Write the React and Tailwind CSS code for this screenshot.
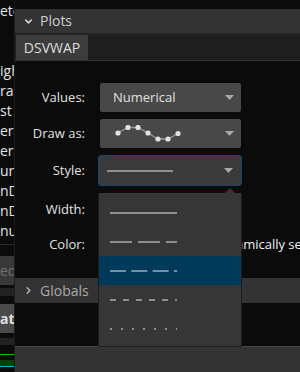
import { ChevronDown, ChevronRight } from 'lucide-react'

const leftLines = ['eter', 'igh', 'rail', 'st', 'erag', 'erag', 'unt', 'nDa', 'nDa', 'nua']

function Caret() {
  return (
    <svg width="9" height="5" viewBox="0 0 9 5" className="shrink-0">
      <path d="M0 0 L9 0 L4.5 5 Z" fill="#a8a8a8" />
    </svg>
  )
}

function Stroke({ dash, w = 67 }) {
  return (
    <svg width={w} height="2" className="block">
      <line x1="0" y1="1" x2={w} y2="1" stroke="#e8e8e8" strokeWidth="1.2" strokeDasharray={dash} />
    </svg>
  )
}

function Sparkline() {
  const pts = [[3, 8], [13, 2.5], [23, 2.5], [33, 8], [43, 14], [53, 14], [63, 8.5]]
  return (
    <svg width="68" height="18" viewBox="0 0 68 18">
      <polyline points={pts.map(p => p.join(',')).join(' ')} fill="none" stroke="#9a9a9a" strokeWidth="1.3" />
      {pts.map(([x, y], i) => <circle key={i} cx={x} cy={y} r="2.6" fill="#e2e2e2" />)}
    </svg>
  )
}

function Label({ children }) {
  return <div className="w-[70px] text-right text-[#e2e2e2] shrink-0">{children}</div>
}

export default function App() {
  return (
    <div className="w-[300px] h-[372px] flex bg-[#0b0b0b] overflow-hidden text-[13px] leading-none font-['Open_Sans',sans-serif]">
      {/* clipped left column */}
      <div className="w-[14px] shrink-0 flex flex-col overflow-hidden">
        <div className="flex flex-col pt-[1px]">
          {leftLines.map((t, i) => (
            <div key={i} className={`h-[20px] flex items-center whitespace-nowrap text-[#e4e4e4] text-[14px] ${i === 1 ? 'mt-[40px]' : ''}`}>{t}</div>
          ))}
        </div>
        <div className="mt-[3px] h-px bg-[#2c2c2c]" />
        <div className="mt-[11px] h-[29px] bg-[#383838] flex items-center whitespace-nowrap text-[#707070] text-[14px]">ed</div>
        <div className="mt-[3px] h-[8px] bg-[#222]" />
        <div className="mt-[8px] h-[29px] bg-[#4a4a4a] flex items-center whitespace-nowrap text-[#e0e0e0] font-bold text-[14px]">ate</div>
        <div className="mt-[5px] h-[7px] bg-[#222]" />
        <div className="mt-[9px] h-px bg-[#00c400]" />
        <div className="mt-[5px] h-[6px] bg-[#064006]" />
        <div className="h-px bg-[#00b8d0]" />
      </div>
      <div className="w-px shrink-0 bg-[#1c1c1c]" />

      {/* main panel */}
      <div className="relative flex-1 flex flex-col">
        <div className="h-[9px]" />
        <div className="h-[24px] bg-[#333] flex items-center text-[#cfcfcf] text-[14px]">
          <ChevronDown size={11} strokeWidth={3.5} className="ml-[8px] text-[#cfcfcf]" />
          <span className="ml-[6px]">Plots</span>
        </div>
        <div className="h-[2px] bg-[#232323]" />
        <div className="h-[25px] bg-[#1e1e1e] flex">
          <div className="ml-px w-[72px] bg-[#3c3c3c] flex items-center justify-center text-[#dcdcdc] text-[14px]">DSVWAP</div>
        </div>
        <div className="h-px bg-[#333]" />

        <div className="pt-[22px] flex flex-col">
          <div className="h-[29px] flex items-center">
            <Label>Values:</Label>
            <div className="ml-[15px] w-[141px] h-full bg-[#484848] rounded-[2px] flex items-center justify-between pl-[13px] pr-[7px] text-[#e0e0e0]">
              <span>Numerical</span>
              <Caret />
            </div>
          </div>
          <div className="mt-[7px] h-[29px] flex items-center">
            <Label>Draw as:</Label>
            <div className="ml-[15px] w-[141px] h-full bg-[#484848] rounded-[2px] flex items-center justify-between pl-[15px] pr-[7px]">
              <Sparkline />
              <Caret />
            </div>
          </div>
          <div className="mt-[7px] h-[31px] flex items-center">
            <Label>Style:</Label>
            <div className="ml-[13px] w-[144px] h-full bg-[#3a3a3a] border border-[#0c4c70] rounded-[3px] flex items-center justify-between pl-[8px] pr-[8px]">
              <Stroke w={66} />
              <Caret />
            </div>
          </div>
          <div className="mt-[8px] h-[30px] flex items-center">
            <Label>Width:</Label>
            <div className="ml-[15px] w-[141px] h-full bg-[#3a3a3a]" />
          </div>
          <div className="mt-[5px] h-[30px] flex items-center">
            <Label>Color:</Label>
            <div className="ml-[15px] w-[40px] h-[24px] bg-[#3a3a3a]" />
            <div className="ml-[20px] w-[13px] h-[13px] border border-[#888]" />
            <span className="ml-[39px] whitespace-nowrap text-[#f0f0f0]">Dynamically set color</span>
          </div>
          <div className="mt-[19px] h-[25px] bg-[#333] flex items-center text-[#a8a8a8] text-[14px]">
            <ChevronRight size={11} strokeWidth={3.5} className="ml-[8px] text-[#b0b0b0]" />
            <span className="ml-[6px]">Globals</span>
          </div>
        </div>
        <div className="flex-1" />
        <div className="h-px bg-[#4a4a4a]" />
        <div className="h-[25px] bg-[#333]" />

        {/* open style dropdown */}
        <div className="absolute left-[83px] top-[193px] w-[144px] h-[154px] bg-[#363636] border-x border-b border-[#1e1e1e] pt-[5px]">
          <svg width="10" height="5" viewBox="0 0 10 5" className="absolute right-[6px] top-[-5px]">
            <path d="M0 5 L5 0 L10 5 Z" fill="#363636" />
          </svg>
          {[null, '22 6', '16 5.3', '6 7', '2 9'].map((d, i) => (
            <div key={i} className={`h-[29px] flex items-center pl-[11px] ${i === 2 ? 'bg-[#003a5a]' : ''}`}>
              <Stroke dash={d ?? undefined} />
            </div>
          ))}
        </div>
      </div>
    </div>
  )
}
